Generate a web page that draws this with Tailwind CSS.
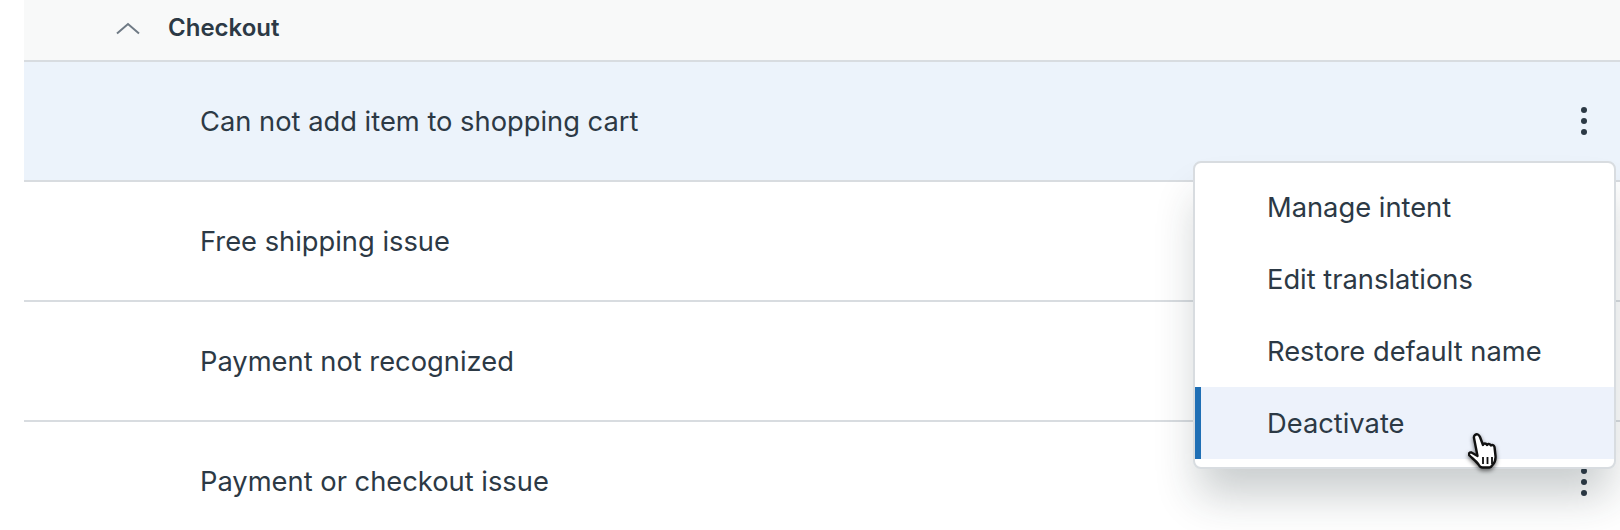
<!doctype html>
<html><head><meta charset="utf-8"><script src="https://cdn.jsdelivr.net/npm/@tailwindcss/browser@4"></script></head>
<body class="bg-white">
<div class="relative w-[1620px] h-[530px] overflow-hidden pl-[24px] font-['Inter',sans-serif] text-[#2c3945]">
  <div class="flex h-[62px] items-center border-b-2 border-[#d8dce0] bg-[#f8f9f9] pb-[5px]">
    <svg class="ml-[92px] h-[14px] w-[24px]" viewBox="0 0 24 14" fill="none" stroke="#6f7a85" stroke-width="2"><path d="M1 12.500 12 3l11 9.500"/></svg>
    <span class="ml-[28px] text-[24px] font-semibold">Checkout</span>
  </div>
  <div class="flex h-[120px] items-center justify-between border-b-2 border-[#d8dce0] bg-[#ecf3fb] pl-[176px] pr-[32px] text-[27.3px]">
    <span class="pt-[2px]">Can not add item to shopping cart</span>
    <svg class="h-[30px] w-[8px]" viewBox="0 0 8 30" fill="#2c3945"><circle cx="4" cy="4" r="3"/><circle cx="4" cy="15" r="3"/><circle cx="4" cy="26" r="3"/></svg>
  </div>
  <div class="flex h-[120px] items-center justify-between border-b-2 border-[#d8dce0] pl-[176px] pr-[32px] text-[27.3px]"><span class="pt-[2px]">Free shipping issue</span></div>
  <div class="flex h-[120px] items-center justify-between border-b-2 border-[#d8dce0] pl-[176px] pr-[32px] text-[27.3px]"><span class="pt-[2px]">Payment not recognized</span></div>
  <div class="flex h-[120px] items-center justify-between pl-[176px] pr-[32px] text-[27.3px]">
    <span>Payment or checkout issue</span>
    <svg class="h-[30px] w-[8px]" viewBox="0 0 8 30" fill="#2c3945"><circle cx="4" cy="4" r="3"/><circle cx="4" cy="15" r="3"/><circle cx="4" cy="26" r="3"/></svg>
  </div>
  <div class="absolute left-[1193px] top-[161px] w-[423px] h-[308px] rounded-[8px] border-2 border-[#d8dce0] bg-white pt-[8px] text-[27.3px] shadow-[0_32px_44px_-6px_rgba(30,45,50,0.24)]">
    <div class="flex h-[72px] items-center pl-[72px] pt-[2px]">Manage intent</div>
    <div class="flex h-[72px] items-center pl-[72px] pt-[2px]">Edit translations</div>
    <div class="flex h-[72px] items-center pl-[72px] pt-[2px]">Restore default name</div>
    <div class="flex h-[72px] items-center border-l-[6px] border-[#1f6fb5] bg-[#edf2fb] pl-[66px] pt-[2px]">Deactivate</div>
  </div>
  <svg class="absolute left-[1468px] top-[433px] h-[38px] w-[34px]" viewBox="0 0 34 38" style="filter:drop-shadow(0 2px 2px rgba(0,0,0,.55))">
    <path d="M7 2c2-1.500 4-.5 5 2l3 8c.5-2 3-2 4 0 .5-1.500 3-1.500 4 .5 1-1 3-.5 3.500 1.500l1 9c.3 4-1 7-3 9-1 1.500-2 2.500-3 2.500h-7c-2 0-3-1-4-3-2-3-6-6-9-9-1.500-1.500 0-3.500 2-3l6 3.500L6 5c-.2-1 0-2.200 1-3z" fill="#fff" stroke="#111" stroke-width="2.400" stroke-linejoin="round"/>
    <path d="M15 24v7M19.500 24v7M24 24v7" stroke="#111" stroke-width="1.800"/>
  </svg>
</div>
</body></html>
